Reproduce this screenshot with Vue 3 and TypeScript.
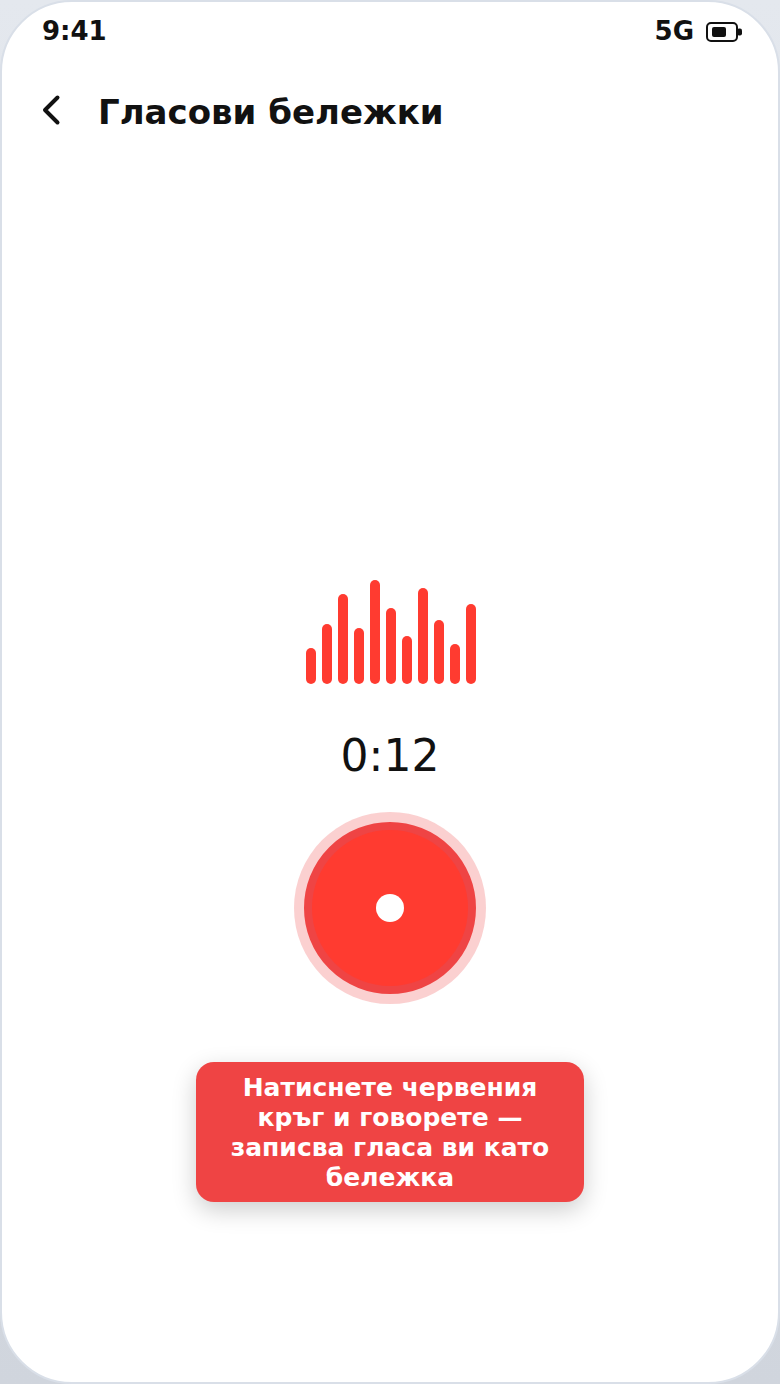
<script setup lang="ts">
// waveform bar heights
const bars: number[] = [36, 60, 90, 56, 104, 76, 48, 96, 64, 40, 80];
</script>

<template>
    <div class="phone">
        <div class="status-bar">
            <span>9:41</span>
            <div class="status-right">
                <span>5G</span>
                <svg class="battery" width="36" height="20" viewBox="0 0 36 20" fill="none">
                    <rect x="1" y="1" width="30" height="18" rx="4" stroke="#111" stroke-width="2" />
                    <rect x="6" y="5" width="14" height="10" rx="2" fill="#111" />
                    <rect x="31" y="6.5" width="5" height="7" rx="2" fill="#111" />
                </svg>
            </div>
        </div>

        <header class="top-bar">
            <svg class="back" width="20" height="32" viewBox="0 0 20 32" fill="none">
                <path d="M15.5 3.5 L3 16 L15.5 28.5" stroke="#111" stroke-width="4" stroke-linecap="round" stroke-linejoin="round" />
            </svg>
            <h1 class="title">Гласови бележки</h1>
        </header>

        <main class="recorder">
            <div class="wave">
                <span v-for="(h, i) in bars" :key="i" class="bar" :style="{ height: h + 'px' }"></span>
            </div>
            <div class="timer">0:12</div>
            <button type="button" class="record">
                <span class="dot"></span>
            </button>
            <div class="hint">Натиснете червения кръг и говорете — записва гласа ви като бележка</div>
        </main>
    </div>
</template>

<style>
html,
body {
    margin: 0;
    background: linear-gradient(180deg, #e4e8ee, #d0d5dd);
}
</style>

<style scoped>
.phone {
    box-sizing: border-box;
    width: 780px;
    height: 1384px;
    display: flex;
    flex-direction: column;
    background: #fff;
    border: 2px solid #d9dfe8;
    border-radius: 72px;
    overflow: hidden;
    color: #111;
    font-family: "DejaVu Sans", sans-serif;
}

.status-bar {
    display: flex;
    align-items: center;
    justify-content: space-between;
    height: 58px;
    padding: 0 36px 0 40px;
    font-size: 26px;
    font-weight: 700;
}

.status-right {
    display: flex;
    align-items: center;
    gap: 12px;
}

.battery {
    margin-top: 2px;
}

.top-bar {
    display: flex;
    align-items: center;
    gap: 36px;
    height: 104px;
    padding: 0 40px;
}

.back {
    flex: none;
    margin-top: -4px;
}

.title {
    margin: 0;
    font-size: 34px;
    font-weight: 700;
}

.recorder {
    display: flex;
    flex-direction: column;
    align-items: center;
    padding-top: 416px;
}

.wave {
    display: flex;
    align-items: flex-end;
    gap: 6px;
    height: 104px;
    padding-left: 2px;
}

.bar {
    width: 10px;
    border-radius: 5px;
    background: #ff3b30;
}

.timer {
    margin-top: 46px;
    font-size: 44px;
    line-height: 52px;
}

.record {
    box-sizing: border-box;
    display: flex;
    align-items: center;
    justify-content: center;
    width: 172px;
    height: 172px;
    margin-top: 40px;
    padding: 0;
    background: #ff3b30;
    border: 8px solid #ef4444;
    border-radius: 50%;
    box-shadow: 0 0 0 10px rgba(239, 68, 68, 0.25);
}

.dot {
    width: 28px;
    height: 28px;
    border-radius: 50%;
    background: #fff;
}

.hint {
    box-sizing: border-box;
    width: 388px;
    margin-top: 68px;
    padding: 11px 24px 9px;
    background: #ef4444;
    border-radius: 18px;
    box-shadow: 0 8px 24px rgba(0, 0, 0, 0.2);
    color: #fff;
    font-size: 25px;
    font-weight: 700;
    line-height: 30px;
    text-align: center;
}
</style>
